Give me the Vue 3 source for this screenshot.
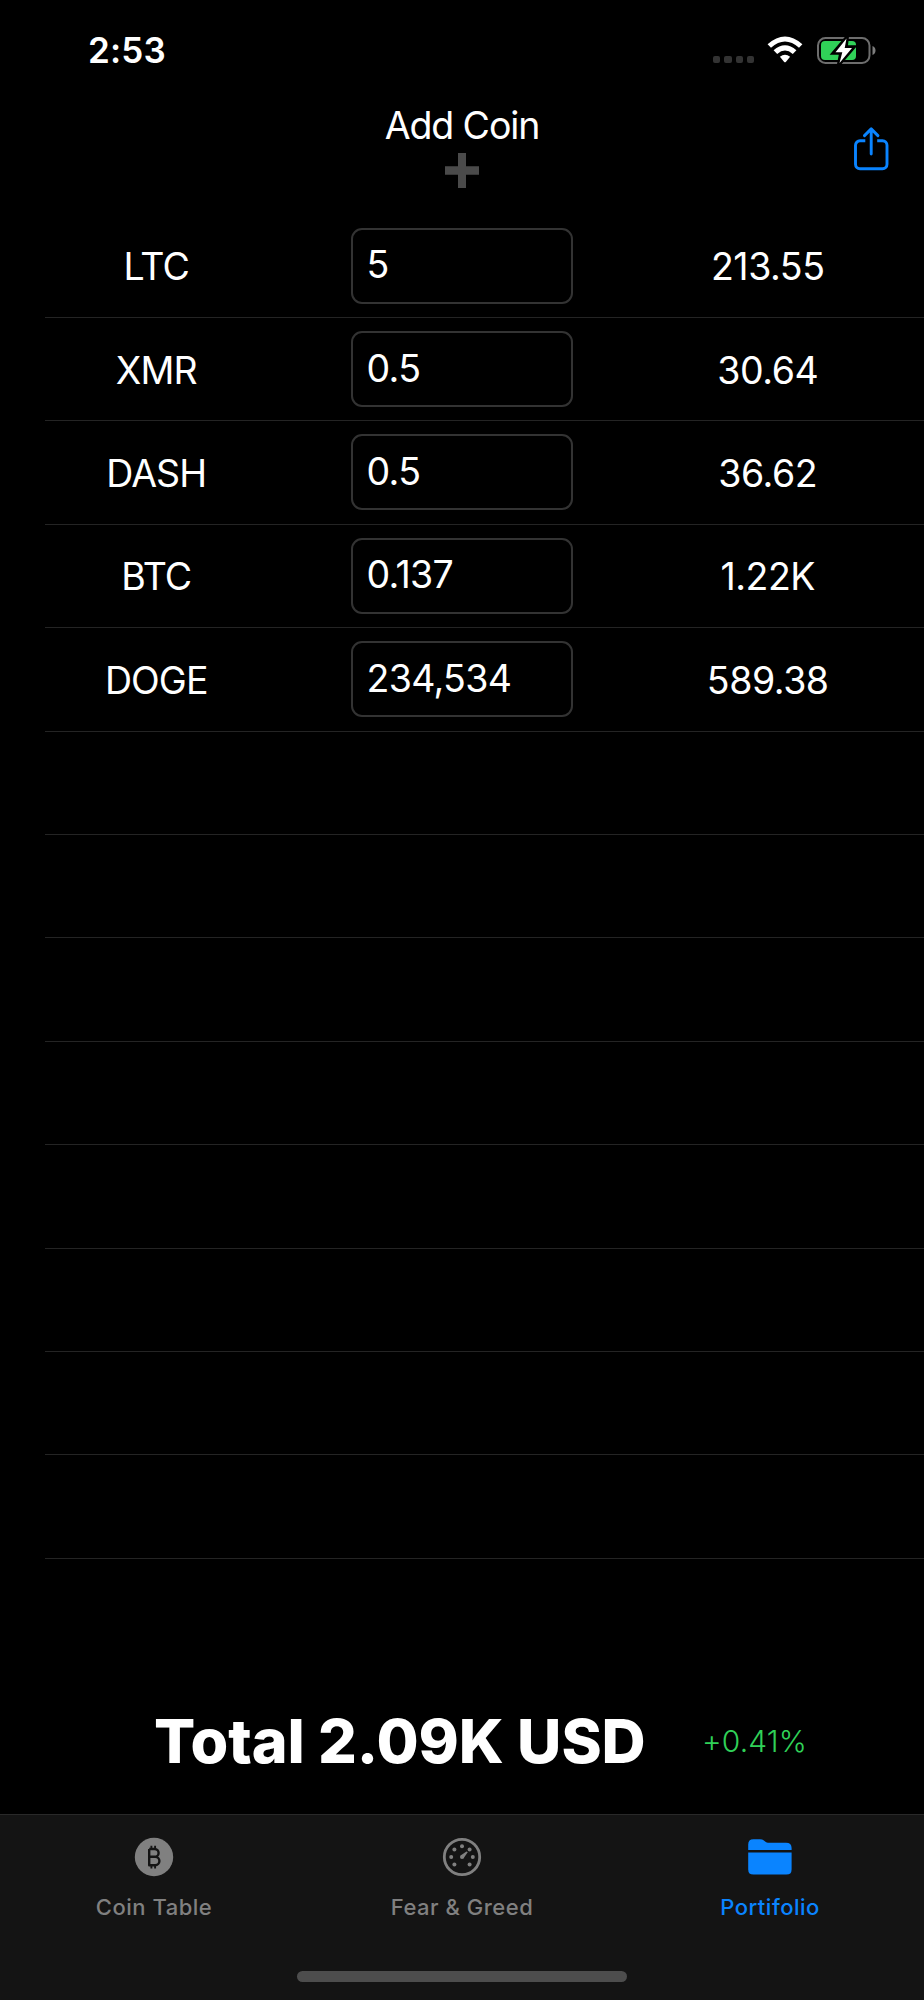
<template>
  <div class="phone">
    <div class="status-bar">
      <span class="time">2:53</span>
      <div class="status-icons">
        <div class="signal"><i v-for="n in 4" :key="n"></i></div>
        <svg class="wifi" width="36" height="27" viewBox="0 0 36 27">
          <path d="M0.6 8.2 Q18 -7.4 35.4 8.2 L32 11.7 Q18 -0.9 4 11.7Z" fill="#fff" />
          <path d="M6.6 14.3 Q18 4.2 29.4 14.3 L25.8 17.9 Q18 11 10.2 17.9Z" fill="#fff" />
          <path d="M12.9 20.7 Q18 17 23.1 20.7 L18.8 26 Q18 26.7 17.2 26Z" fill="#fff" />
        </svg>
        <svg class="battery" width="60" height="29" viewBox="0 0 60 29">
          <rect x="1" y="2" width="51.5" height="25" rx="7.5" fill="none" stroke="#6d6d6d" stroke-width="2" />
          <path d="M55.5 10 Q58.5 11.2 58.5 14.5 Q58.5 17.8 55.5 19Z" fill="#7d7d7d" />
          <rect x="4" y="5" width="35" height="19" rx="4" fill="#30d158" />
          <path d="M29.5 2.5 L17.5 16.5 H24.5 L22.5 27 L35.8 11.5 H28.5Z" fill="#fff" stroke="#000" stroke-width="4.5" />
          <path d="M29.5 2.5 L18.5 16.2 H25.3 L22.5 27 L35 11.9 H27.7Z" fill="#fff" />
        </svg>
      </div>
    </div>

    <header class="header">
      <div class="add">
        <span class="add-label">Add Coin</span>
        <svg width="34" height="35" viewBox="0 0 34 35">
          <path d="M13 0h8v13.3h13v8.4H21V35h-8V21.7H0v-8.4h13z" fill="#4a4a4a" />
        </svg>
      </div>
      <svg class="share" width="36" height="44" viewBox="0 0 36 44" fill="none" stroke="#0a84ff" stroke-width="2.9" stroke-linecap="round" stroke-linejoin="round">
        <path d="M12.3 13.8H7a4.5 4.5 0 0 0-4.5 4.5v19a4.5 4.5 0 0 0 4.5 4.5h22.5a4.5 4.5 0 0 0 4.5-4.5v-19a4.5 4.5 0 0 0-4.5-4.5H24.2" stroke-linecap="butt" />
        <path d="M18.2 27V2M11.5 8.6l6.7-6.7 6.7 6.7" />
      </svg>
    </header>

    <div class="table">
      <div class="row" v-for="coin in coins" :key="coin.symbol">
        <span class="symbol">{{ coin.symbol }}</span>
        <input class="amount" type="text" v-model="coin.amount">
        <span class="value">{{ coin.value }}</span>
      </div>
      <div class="row" v-for="n in 8" :key="n"></div>
    </div>

    <div class="total">
      <strong>Total 2.09K USD</strong>
      <span class="change">+0.41%</span>
    </div>

    <nav class="tabs">
      <div class="tab-list">
        <a class="tab">
          <svg width="40" height="40" viewBox="0 0 40 40">
            <circle cx="20" cy="20" r="19.2" fill="#808080" />
            <g fill="none" stroke="#141414" stroke-width="2.4" stroke-linejoin="round">
              <path d="M15.2 12v16.2h6a4.2 4.2 0 0 0 0-8.4h-6M15.2 12h5.5a3.9 3.9 0 0 1 0 7.8" />
              <path d="M17.4 8.8V12M21.1 8.8V12M17.4 28.2v3.2M21.1 28.2v3.2" stroke-width="1.9" />
            </g>
          </svg>
          <span>Coin Table</span>
        </a>
        <a class="tab">
          <svg width="40" height="40" viewBox="0 0 40 40" fill="#808080">
            <circle cx="20" cy="20" r="17.7" fill="none" stroke="#808080" stroke-width="2.8" />
            <circle v-for="(dot, i) in gaugeDots" :key="i" :cx="dot[0]" :cy="dot[1]" r="2" />
            <path d="M18.6 18.6L24.4 14.4Q25.6 14.4 25.5 15.6L21.4 21.4z" />
          </svg>
          <span>Fear &amp; Greed</span>
        </a>
        <a class="tab active">
          <svg width="46" height="40" viewBox="0 0 46 40" fill="#0a84ff">
            <path d="M1.2 13V7.5Q1.2 2.3 6.4 2.3H13q2.4 0 4.2 1.4l1.6 1.3q.9.7 2.2.7H39q5.6 0 5.6 5.2V13z" />
            <path d="M1.2 15.6h43.4V32.4q0 5.2-5.2 5.2H6.4q-5.2 0-5.2-5.2z" />
          </svg>
          <span>Portifolio</span>
        </a>
      </div>
      <div class="home-indicator"></div>
    </nav>
  </div>
</template>

<script setup>
import { ref } from 'vue'

const coins = ref([
  { symbol: 'LTC', amount: '5', value: '213.55' },
  { symbol: 'XMR', amount: '0.5', value: '30.64' },
  { symbol: 'DASH', amount: '0.5', value: '36.62' },
  { symbol: 'BTC', amount: '0.137', value: '1.22K' },
  { symbol: 'DOGE', amount: '234,534', value: '589.38' }
])

const gaugeDots = [
  [20, 9.2], [12.4, 12.4], [27.6, 12.4], [9.2, 20],
  [30.8, 20], [12.4, 27.5], [27.6, 27.5], [20, 20]
]
</script>

<style>
body {
  background: #000;
}
</style>

<style scoped>
.phone {
  display: flex;
  flex-direction: column;
  width: 924px;
  height: 2000px;
  overflow: hidden;
  background: #000;
  color: #fff;
  font-family: Inter, "Liberation Sans", sans-serif;
  font-size: 37.5px;
  letter-spacing: -0.025em;
}

.status-bar {
  display: flex;
  justify-content: space-between;
  height: 102px;
  padding: 0 47px 0 88px;
  box-sizing: border-box;
}

.time {
  padding-top: 29px;
  font-size: 35px;
  line-height: 43px;
  font-weight: 600;
  letter-spacing: 0.005em;
}

.status-icons {
  display: flex;
  align-items: flex-start;
  padding-top: 36px;
}

.signal {
  display: flex;
  gap: 4px;
  margin: 20px 14px 0 0;
}

.signal i {
  width: 7.2px;
  height: 7.2px;
  border-radius: 2px;
  background: #333;
}

.wifi {
  margin-left: -1px;
}

.battery {
  margin-left: 14px;
}

.header {
  display: grid;
  grid-template-columns: 1fr auto 1fr;
  height: 112.4px;
}

.add {
  display: flex;
  flex-direction: column;
  align-items: center;
  grid-column: 2;
}

.add-label {
  line-height: 46px;
  padding: 1px 0 4px;
  letter-spacing: -0.03em;
}

.share {
  justify-self: end;
  margin: 25px 35px 0 0;
}

.row {
  display: grid;
  grid-template-columns: 1fr 222px 1fr;
  align-items: center;
  column-gap: 83.5px;
  height: 103.43px;
  margin-left: 45px;
  box-sizing: border-box;
  padding-right: 45px;
  border-bottom: 1px solid #242424;
}

.symbol,
.value {
  text-align: center;
  line-height: 46px;
  padding-top: 3px;
}

.value {
  letter-spacing: -0.012em;
}

.amount {
  width: 222px;
  height: 76px;
  box-sizing: border-box;
  margin: 0;
  padding: 0 13.5px 2px;
  border: 2px solid #333;
  border-radius: 11px;
  outline: none;
  background: #000;
  color: #fff;
  font: inherit;
  letter-spacing: -0.018em;
}

.total {
  display: flex;
  align-items: center;
  flex: 1;
  padding: 110px 0 0 154px;
}

.total strong {
  width: 548px;
  font-size: 61px;
  line-height: 72px;
  font-weight: 800;
  letter-spacing: -0.001em;
  white-space: nowrap;
}

.change {
  color: #30d158;
  font-size: 30px;
  font-weight: 300;
  letter-spacing: 0.005em;
}

.tabs {
  height: 186px;
  box-sizing: border-box;
  border-top: 1px solid #292929;
  background: #141414;
}

.tab-list {
  display: grid;
  grid-template-columns: repeat(3, 1fr);
  height: 156px;
}

.tab {
  display: flex;
  flex-direction: column;
  align-items: center;
  gap: 17px;
  padding-top: 22px;
  color: #808080;
  font-size: 22px;
  line-height: 27px;
  font-weight: 500;
  letter-spacing: 0.023em;
}

.active {
  color: #0a84ff;
}

.home-indicator {
  width: 330px;
  height: 11px;
  margin: 0 auto;
  border-radius: 6px;
  background: #4d4d4d;
}
</style>
